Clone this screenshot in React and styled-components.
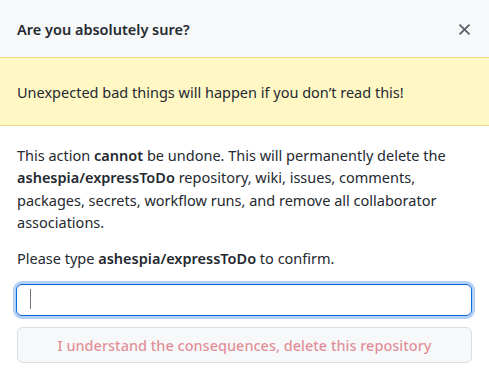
import styled, { createGlobalStyle } from "styled-components";

const GlobalStyle = createGlobalStyle`
  html, body {
    margin: 0;
    padding: 0;
    background: #ffffff;
  }
  body {
    font-family: "Noto Sans", "Open Sans", "Liberation Sans", sans-serif;
    color: #24292f;
  }
`;

const Dialog = styled.div`
  width: 489px;
  min-height: 375px;
  background: #ffffff;
  display: flex;
  flex-direction: column;
`;

const Header = styled.div`
  height: 57px;
  box-sizing: border-box;
  display: flex;
  align-items: center;
  justify-content: space-between;
  padding: 0 17px;
  background: #f6f8fa;
`;

const Title = styled.h3`
  margin: 0;
  font-size: 14.5px;
  font-weight: 600;
  color: #24292f;
`;

const CloseButton = styled.button`
  display: flex;
  align-items: center;
  justify-content: center;
  padding: 0;
  margin: 1px -3px 0 0;
  width: 22px;
  height: 22px;
  border: 0;
  background: transparent;
  color: #57606a;
  cursor: pointer;
`;

const Flash = styled.div`
  height: 69px;
  box-sizing: border-box;
  display: flex;
  align-items: center;
  padding: 0 17px;
  background: #fff8c5;
  border-top: 1px solid #f0d98a;
  border-bottom: 1px solid #f0d98a;
  font-size: 14.5px;
  color: #24292f;
`;

const Body = styled.div`
  padding: 18px 16px 16px 17px;
  font-size: 14.5px;
  line-height: 22.4px;
  color: #24292f;
`;

const Paragraph = styled.p`
  margin: 0 0 ${(props) => props.$gap || 0}px;
`;

const Strong = styled.strong`
  font-weight: 600;
`;

const FieldWrap = styled.div`
  position: relative;
  margin: 0 0 11px -1px;

  &::after {
    content: "";
    position: absolute;
    left: 14px;
    top: 5px;
    width: 1px;
    height: 20px;
    background: #6e7781;
    pointer-events: none;
  }
`;

const Field = styled.input`
  display: block;
  width: 456px;
  height: 32px;
  box-sizing: border-box;
  margin: 0;
  padding: 0 12px;
  font: inherit;
  font-size: 14.5px;
  color: #24292f;
  background: #ffffff;
  border: 1px solid #0969da;
  border-radius: 6px;
  box-shadow: 0 0 0 3px rgba(9, 105, 218, 0.3);
  outline: none;
  caret-color: transparent;
`;

const DangerButton = styled.button`
  display: block;
  width: 455px;
  height: 36px;
  box-sizing: border-box;
  padding: 0 16px;
  font: inherit;
  font-size: 14.5px;
  font-weight: 500;
  color: rgba(207, 34, 46, 0.5);
  background: #f6f8fa;
  border: 1px solid #d8dee4;
  border-radius: 6px;
  cursor: not-allowed;
`;

function XIcon() {
  return (
    <svg width="19" height="19" viewBox="0 0 16 16" fill="currentColor">
      <path d="M3.72 3.72a.75.75 0 0 1 1.06 0L8 6.94l3.22-3.22a.749.749 0 0 1 1.275.326.749.749 0 0 1-.215.734L9.06 8l3.22 3.22a.749.749 0 0 1-.326 1.275.749.749 0 0 1-.734-.215L8 9.06l-3.22 3.22a.751.751 0 0 1-1.042-.018.751.751 0 0 1-.018-1.042L6.94 8 3.72 4.78a.75.75 0 0 1 0-1.06Z" />
    </svg>
  );
}

export default function App() {
  return (
    <>
      <GlobalStyle />
      <Dialog>
        <Header>
          <Title>Are you absolutely sure?</Title>
          <CloseButton aria-label="Close dialog">
            <XIcon />
          </CloseButton>
        </Header>
        <Flash>Unexpected bad things will happen if you don’t read this!</Flash>
        <Body>
          <Paragraph $gap={13}>
            This action <Strong>cannot</Strong> be undone. This will permanently
            delete the <Strong>ashespia/expressToDo</Strong> repository, wiki,
            issues, comments, packages, secrets, workflow runs, and remove all
            collaborator associations.
          </Paragraph>
          <Paragraph $gap={15}>
            Please type <Strong>ashespia/expressToDo</Strong> to confirm.
          </Paragraph>
          <FieldWrap>
            <Field type="text" autoFocus aria-label="Repository name" />
          </FieldWrap>
          <DangerButton disabled>
            I understand the consequences, delete this repository
          </DangerButton>
        </Body>
      </Dialog>
    </>
  );
}
